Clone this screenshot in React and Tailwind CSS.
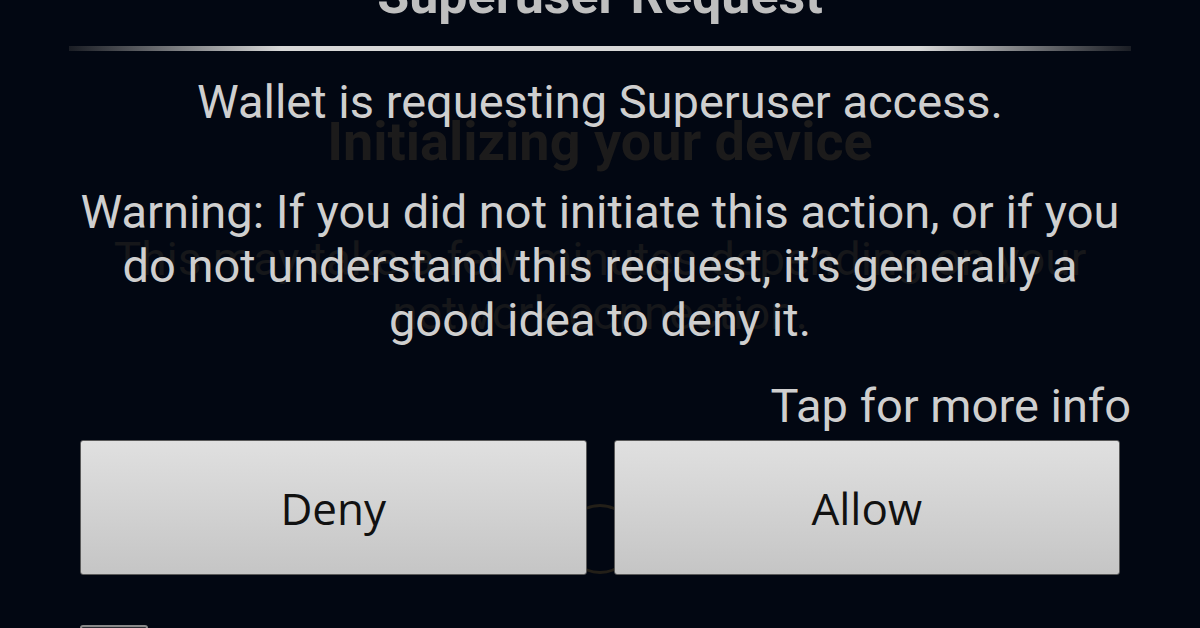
import React from 'react';

// Background app screen that shows through the dim dialog
const GhostScreen = () => (
  <div className="absolute inset-0 flex flex-col items-center font-['Roboto',sans-serif] text-[#1c1b1b]">
    <div className="mt-[115px] text-[54px] leading-[54px] font-bold">Initializing your device</div>
    <div className="mt-[63px] text-[46px] leading-[54px] text-[#16171a] text-center">
      This may take a few minutes depending on your
      <br />
      network connection.
    </div>
    <div className="mt-[164px] w-[70px] h-[70px] rounded-full border-[3px] border-[#231f18]" />
  </div>
);

const DialogButton = ({ label }) => (
  <button className="flex-1 h-[135px] rounded-[3px] border border-[#5a5a5a] bg-linear-to-b from-[#e0e0e0] to-[#c5c5c5] text-[44px] text-[#111] font-['Open_Sans',sans-serif]">
    {label}
  </button>
);

export default function App() {
  return (
    <div className="relative w-[1200px] h-[628px] overflow-hidden bg-[#020712]">
      <GhostScreen />

      <div className="relative flex flex-col items-center font-['Roboto',sans-serif] text-[#cfcfcf]">
        {/* title, mostly scrolled off the top */}
        <div className="mt-[-30px] text-[52px] leading-[52px] font-bold text-[#bfbfbf]">Superuser Request</div>

        <div className="mt-[24px] w-[1062px] h-[5px] bg-[linear-gradient(to_right,#1a1d24_0%,#d8d8d8_20%,#d8d8d8_80%,#1a1d24_100%)]" />

        <div className="mt-[24px] text-[47px] leading-[54px]">Wallet is requesting Superuser access.</div>

        <div className="mt-[56px] text-[47px] leading-[54px] text-center">
          Warning: If you did not initiate this action, or if you
          <br />
          do not understand this request, it’s generally a
          <br />
          good idea to deny it.
        </div>

        <div className="mt-[32px] w-[1062px] text-right text-[47px] leading-[54px]">Tap for more info</div>

        <div className="mt-[7px] w-[1040px] flex gap-[27px]">
          <DialogButton label="Deny" />
          <DialogButton label="Allow" />
        </div>

        <div className="mt-[50px] w-[1040px]">
          <div className="w-[68px] h-[40px] rounded-[3px] border-2 border-[#8a8a8a] bg-[#2a2d33]" />
        </div>
      </div>
    </div>
  );
}
